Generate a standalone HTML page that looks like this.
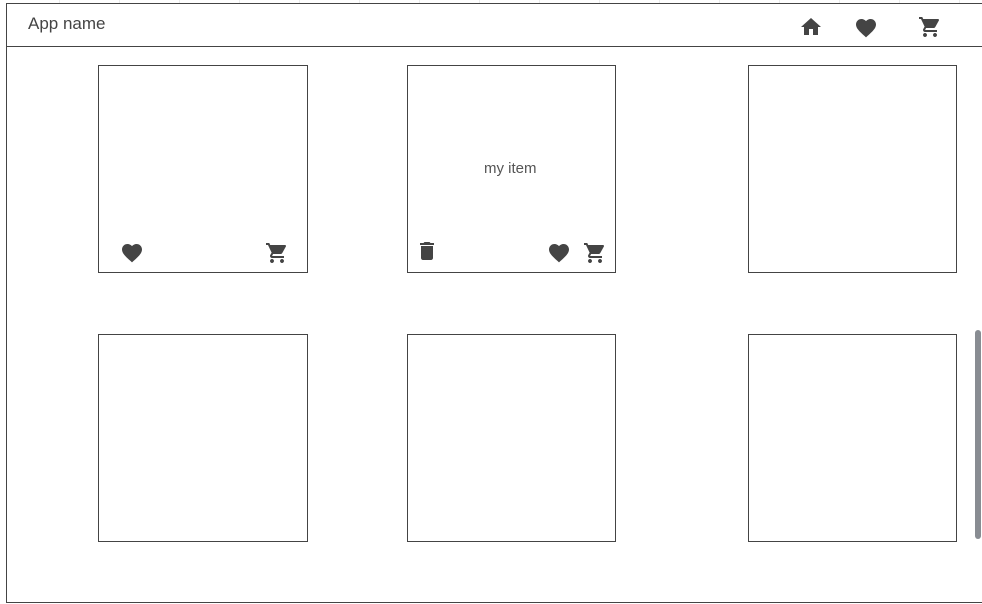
<!DOCTYPE html>
<html><head><meta charset="utf-8"><style>
html,body{margin:0;padding:0;background:#fff;}
body{width:982px;height:604px;position:relative;overflow:hidden;font-family:"Liberation Sans",sans-serif;}
.grid{position:absolute;left:0;top:0;width:982px;height:3px;background:repeating-linear-gradient(90deg,transparent 0 59px,#ececec 59px 60px);}
.frame{position:absolute;left:6px;top:3px;width:980px;height:598px;border-left:1px solid #444;border-top:1px solid #444;border-bottom:1px solid #444;}
.hline{position:absolute;left:6px;top:46px;width:976px;height:1px;background:#444;}
.title{position:absolute;left:28px;top:14px;font-size:17px;color:#444;}
.card{position:absolute;width:210px;height:208px;border:1px solid #444;box-sizing:border-box;}
svg{position:absolute;width:24px;height:24px;fill:#444;}
.lbl{position:absolute;left:484px;top:160px;font-size:15px;color:#555;}
.sb{position:absolute;left:975px;top:330px;width:6px;height:209px;border-radius:3px;background:#888c92;}
</style></head><body>
<div class="grid"></div>
<div class="frame"></div>
<div class="hline"></div>
<div class="title">App name</div>
<svg style="left:799px;top:15px" viewBox="0 0 24 24"><path d="M10 20v-6h4v6h5v-8h3L12 3 2 12h3v8z"/></svg>
<svg style="left:854px;top:16px" viewBox="0 0 24 24"><path d="M12 21.35l-1.45-1.32C5.4 15.36 2 12.28 2 8.5 2 5.42 4.42 3 7.5 3c1.74 0 3.41.81 4.5 2.09C13.09 3.81 14.76 3 16.5 3 19.58 3 22 5.42 22 8.5c0 3.78-3.4 6.86-8.55 11.54L12 21.35z"/></svg>
<svg style="left:918px;top:15px" viewBox="0 0 24 24"><path d="M7 18c-1.1 0-1.99.9-1.99 2S5.9 22 7 22s2-.9 2-2-.9-2-2-2zM1 2v2h2l3.6 7.59-1.35 2.45c-.16.28-.25.61-.25.96 0 1.1.9 2 2 2h12v-2H7.42c-.14 0-.25-.11-.25-.25l.03-.12.9-1.63h7.45c.75 0 1.41-.41 1.75-1.03l3.58-6.49A1 1 0 0020 4H5.21l-.94-2H1zm16 16c-1.1 0-1.99.9-1.99 2s.89 2 1.99 2 2-.9 2-2-.9-2-2-2z"/></svg>

<div class="card" style="left:98px;top:65px"></div>
<div class="card" style="left:407px;top:65px;width:209px"></div>
<div class="card" style="left:748px;top:65px;width:209px"></div>
<div class="card" style="left:98px;top:334px"></div>
<div class="card" style="left:407px;top:334px;width:209px"></div>
<div class="card" style="left:748px;top:334px;width:209px"></div>
<div class="lbl">my item</div>

<svg style="left:120px;top:241px" viewBox="0 0 24 24"><path d="M12 21.35l-1.45-1.32C5.4 15.36 2 12.28 2 8.5 2 5.42 4.42 3 7.5 3c1.74 0 3.41.81 4.5 2.09C13.09 3.81 14.76 3 16.5 3 19.58 3 22 5.42 22 8.5c0 3.78-3.4 6.86-8.55 11.54L12 21.35z"/></svg>
<svg style="left:265px;top:241px" viewBox="0 0 24 24"><path d="M7 18c-1.1 0-1.99.9-1.99 2S5.9 22 7 22s2-.9 2-2-.9-2-2-2zM1 2v2h2l3.6 7.59-1.35 2.45c-.16.28-.25.61-.25.96 0 1.1.9 2 2 2h12v-2H7.42c-.14 0-.25-.11-.25-.25l.03-.12.9-1.63h7.45c.75 0 1.41-.41 1.75-1.03l3.58-6.49A1 1 0 0020 4H5.21l-.94-2H1zm16 16c-1.1 0-1.99.9-1.99 2s.89 2 1.99 2 2-.9 2-2-.9-2-2-2z"/></svg>
<svg style="left:415px;top:239px" viewBox="0 0 24 24"><path d="M6 19c0 1.1.9 2 2 2h8c1.1 0 2-.9 2-2V7H6v12zM19 4h-3.5l-1-1h-5l-1 1H5v2h14V4z"/></svg>
<svg style="left:547px;top:241px" viewBox="0 0 24 24"><path d="M12 21.35l-1.45-1.32C5.4 15.36 2 12.28 2 8.5 2 5.42 4.42 3 7.5 3c1.74 0 3.41.81 4.5 2.09C13.09 3.81 14.76 3 16.5 3 19.58 3 22 5.42 22 8.5c0 3.78-3.4 6.86-8.55 11.54L12 21.35z"/></svg>
<svg style="left:583px;top:241px" viewBox="0 0 24 24"><path d="M7 18c-1.1 0-1.99.9-1.99 2S5.9 22 7 22s2-.9 2-2-.9-2-2-2zM1 2v2h2l3.6 7.59-1.35 2.45c-.16.28-.25.61-.25.96 0 1.1.9 2 2 2h12v-2H7.42c-.14 0-.25-.11-.25-.25l.03-.12.9-1.63h7.45c.75 0 1.41-.41 1.75-1.03l3.58-6.49A1 1 0 0020 4H5.21l-.94-2H1zm16 16c-1.1 0-1.99.9-1.99 2s.89 2 1.99 2 2-.9 2-2-.9-2-2-2z"/></svg>

<div class="sb"></div>
</body></html>
